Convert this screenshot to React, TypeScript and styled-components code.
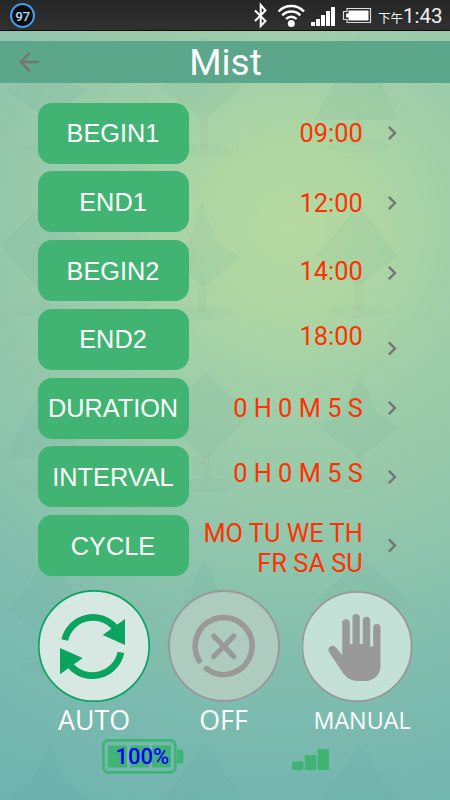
import React from "react";
import styled, { createGlobalStyle } from "styled-components";

const GlobalStyle = createGlobalStyle`
  html, body { margin: 0; padding: 0; }
  * { box-sizing: border-box; }
`;

const Screen = styled.div`
  position: relative;
  width: 450px;
  height: 800px;
  overflow: hidden;
  display: flex;
  flex-direction: column;
  font-family: Roboto, sans-serif;
  background: radial-gradient(
    circle at 291px 227px,
    #b6daa0 0px,
    #add6a3 90px,
    #a0cfa8 170px,
    #97c9aa 270px,
    #8dc4ac 350px,
    #80bdae 450px,
    #75b7af 560px,
    #6fb3af 640px
  );
`;

const Forest = styled.svg`
  position: absolute;
  inset: 0;
  width: 450px;
  height: 800px;
`;

const StatusBar = styled.header`
  position: relative;
  flex: none;
  height: 31px;
  display: flex;
  align-items: center;
  padding: 0 8px 1px 10px;
  background: linear-gradient(#262626, #303030 29px);
  border-bottom: 1px solid #1c0710;
  color: #fff;
`;

const StatusSpacer = styled.div`
  flex: 1;
`;

const ChargeBadge = styled.div`
  width: 25px;
  height: 25px;
  margin-top: 2px;
  border: 2.5px solid #3ba0f0;
  border-radius: 50%;
  background: #0a0a0c;
  color: #b4d4f4;
  display: flex;
  align-items: center;
  justify-content: center;
  font-size: 13.5px;
  font-weight: 500;
  letter-spacing: -0.3px;
`;

const StatusIcons = styled.svg`
  width: 120px;
  height: 30px;
  display: block;
`;

const Clock = styled.div`
  display: flex;
  align-items: baseline;
  width: 64px;
  margin: 4px 0 0 6px;
  font-size: 20.5px;
  line-height: 30px;
  color: #f2f2f2;
  white-space: nowrap;
`;

const Meridiem = styled.span`
  width: 25.5px;
  font-family: "Noto Sans CJK TC", sans-serif;
  font-size: 12.5px;
`;

const TitleBar = styled.div`
  position: relative;
  flex: none;
  height: 42px;
  margin-top: 10px;
  display: grid;
  grid-template-columns: 60px 1fr 60px;
  align-items: center;
  background: #5ca68c;
`;

const BackIcon = styled.svg`
  width: 30px;
  height: 30px;
  margin: -1px 0 0 14px;
  fill: #757575;
`;

const Title = styled.h1`
  margin: 0;
  padding: 1px 0 0 1px;
  text-align: center;
  font-size: 37px;
  line-height: 42px;
  font-weight: 400;
  color: #fff;
`;

const Settings = styled.main`
  position: relative;
  flex: none;
  margin-top: 19.5px;
  padding-left: 37.5px;
  display: flex;
  flex-direction: column;
  gap: 7.8px;
`;

const Row = styled.div`
  height: 61px;
  display: grid;
  grid-template-columns: 151px 174.3px 50px;
  align-items: center;
`;

const Label = styled.button`
  height: 61px;
  padding: 1px 0 0;
  border: none;
  border-radius: 14px;
  background: #41b474;
  color: #fff;
  font: 25.3px "Liberation Sans", Arial, sans-serif;
`;

const Value = styled.div<{ $dy: number }>`
  text-align: right;
  white-space: pre-line;
  font-size: 25.4px;
  line-height: 30px;
  color: #ff3300;
  transform: translateY(${(p) => p.$dy}px);
`;

const Chevron = styled.svg<{ $dy: number }>`
  width: 28px;
  height: 28px;
  margin-left: 15.5px;
  fill: #757575;
  transform: translateY(${(p) => p.$dy}px);
`;

const Modes = styled.section`
  position: relative;
  flex: none;
  margin-top: 14.2px;
  height: 145px;
  padding-left: 38px;
  display: grid;
  grid-template-columns: 130px 133.5px 112px;
`;

const Mode = styled.div`
  width: 112px;
  display: flex;
  flex-direction: column;
  align-items: center;
`;

const ModeIcon = styled.svg`
  width: 112px;
  height: 112px;
  flex: none;
`;

const ModeLabel = styled.span<{ $size: number; $shift: number }>`
  margin-left: ${(p) => p.$shift}px;
  font-family: "Open Sans", sans-serif;
  font-size: ${(p) => p.$size}px;
  line-height: 36px;
  color: #fff;
`;

const Footer = styled.footer`
  position: relative;
  flex: none;
  margin-top: 4px;
  padding: 0 121px 0 102px;
  display: flex;
  justify-content: space-between;
`;

const Battery = styled.div`
  position: relative;
  width: 82px;
  height: 35px;
`;

const BatteryShape = styled.svg`
  display: block;
  width: 82px;
  height: 35px;
`;

const BatteryText = styled.span`
  position: absolute;
  left: 13.5px;
  top: 3.5px;
  font-size: 22px;
  line-height: 28px;
  font-weight: 500;
  color: #0000ff;
`;

const SignalBars = styled.svg`
  width: 37px;
  height: 35px;
`;

const rows = [
  { label: "BEGIN1", value: "09:00", dy: 0, arrow: 0 },
  { label: "END1", value: "12:00", dy: 1, arrow: 1 },
  { label: "BEGIN2", value: "14:00", dy: 0, arrow: 2 },
  { label: "END2", value: "18:00", dy: -3.5, arrow: 9.5 },
  { label: "DURATION", value: "0 H 0 M 5 S", dy: 0.2, arrow: 0 },
  { label: "INTERVAL", value: "0 H 0 M 5 S", dy: -4, arrow: 0 },
  { label: "CYCLE", value: "MO TU WE TH\nFR SA SU", dy: 1.5, arrow: -0.5 },
];

const trees = [
  { x: 49, d: "M49 35 60 78 88 90 45 118 5 90 38 78Z", ground: 150 },
  { x: 204, d: "M198 42Q204 30 210 42L242 88 204 120 160 88Z", ground: 150 },
  { x: 359, d: "M359 35 398 120H314Z", ground: 146 },
  { x: 45, d: "M45 202 88 245 45 298 1 245Z", ground: 310 },
  { x: 202, d: "M202 203 218 245 242 257 204 287 166 257 188 245Z", ground: 313 },
  { x: 359, d: "M359 205 398 256 359 286 316 256Z", ground: 312 },
  { x: 49, d: "M49 372 85 458H5Z", ground: 485 },
  { x: 206, d: "M206 372 251 415 206 459 161 415Z", ground: 485 },
  { x: 360, d: "M360 372 377 413 400 427 360 457 318 427 343 413Z", ground: 483 },
  { x: 49, d: "M49 560 90 610 49 640 6 610Z", ground: 668 },
  { x: 204, d: "M204 558 243 645H164Z", ground: 668 },
  { x: 361, d: "M361 557 408 600 361 645 316 600Z", ground: 668 },
  { x: 49, d: "M49 743 66 783 90 800H8L32 783Z", ground: 850 },
  { x: 204, d: "M204 743 244 800H164Z", ground: 850 },
  { x: 359, d: "M359 743 396 800H322Z", ground: 850 },
];

export default function App() {
  return (
    <>
      <GlobalStyle />
      <Screen>
        <Forest viewBox="0 0 450 800">
          {trees.map((t, i) => (
            <g key={i} fill="#4a9a90">
              <ellipse cx={t.x} cy={t.ground} rx="30" ry="7" opacity="0.035" />
              <rect x={t.x - 4} y={t.ground - 32} width="8" height="32" fill="#b09a86" opacity="0.07" />
              <path d={t.d} opacity="0.065" />
            </g>
          ))}
        </Forest>

        <StatusBar>
          <ChargeBadge>97</ChargeBadge>
          <StatusSpacer />
          <StatusIcons viewBox="252 0 120 30">
            <path d="M255 10.500 265.500 21l-4.800 5V5l4.800 5.500L255 21" fill="none" stroke="#fff" strokeWidth="2" />
            <g fill="none" stroke="#fff" strokeWidth="2.400">
              <path d="M278.500 11.500a17.500 17.500 0 0 1 25.500 0" />
              <path d="M282.300 15.300a12.500 12.500 0 0 1 18 0" />
              <path d="M286 19a7.500 7.500 0 0 1 10.600 0" />
            </g>
            <circle cx="291.300" cy="23.600" r="3.500" fill="#fff" />
            <g fill="#fff">
              <rect x="311" y="22" width="4" height="4" />
              <rect x="316" y="19" width="4" height="7" />
              <rect x="321" y="15" width="4" height="11" />
              <rect x="326" y="11" width="4" height="15" />
              <rect x="331" y="7" width="4" height="19" />
            </g>
            <path d="M347 8.500h23.500v14H347v-3h-3.500v-8h3.500z" fill="none" stroke="#ddd" strokeWidth="1.200" />
            <path d="M348.500 10.500h20v10h-20v-3H346v-4h2.500z" fill="#fff" />
          </StatusIcons>
          <Clock>
            <Meridiem>下午</Meridiem>1:43
          </Clock>
        </StatusBar>

        <TitleBar>
          <BackIcon viewBox="0 0 24 24">
            <path d="M20 11H7.830l5.590-5.590L12 4l-8 8 8 8 1.410-1.410L7.830 13H20z" />
          </BackIcon>
          <Title>Mist</Title>
        </TitleBar>

        <Settings>
          {rows.map((r) => (
            <Row key={r.label}>
              <Label>{r.label}</Label>
              <Value $dy={r.dy}>{r.value}</Value>
              <Chevron $dy={r.arrow} viewBox="0 0 24 24">
                <path d="M10 6 8.590 7.410 13.170 12l-4.580 4.590L10 18l6-6z" />
              </Chevron>
            </Row>
          ))}
        </Settings>

        <Modes>
          <Mode>
            <ModeIcon viewBox="0 0 112 112">
              <circle cx="56" cy="56" r="55.200" fill="#d7e7e2" stroke="#0aa45e" strokeWidth="1.700" />
              <g fill="none" stroke="#0aa45e" strokeWidth="6.800">
                <path d="M26.700 50A29 29 0 0 1 77 37.500" />
                <path d="M82.900 62.400A29 29 0 0 1 32 75" />
              </g>
              <path d="M87 29V55L64.700 45ZM22 58 44.700 68 22 84.300Z" fill="#0aa45e" />
            </ModeIcon>
            <ModeLabel $size={26.800} $shift={0}>AUTO</ModeLabel>
          </Mode>
          <Mode>
            <ModeIcon viewBox="0 0 112 112">
              <circle cx="56" cy="56" r="55" fill="#adcbbf" stroke="#999" strokeWidth="1.900" />
              <g fill="none" stroke="#999" strokeLinecap="round">
                <path d="M31.200 70.700A28.500 28.500 0 1 1 38.500 78.800" strokeWidth="5.600" />
                <path d="M45.700 46 65.900 66.600M65.900 46 45.700 66.600" strokeWidth="5.200" />
              </g>
            </ModeIcon>
            <ModeLabel $size={26.800} $shift={-1}>OFF</ModeLabel>
          </Mode>
          <Mode>
            <ModeIcon viewBox="0 0 112 112">
              <circle cx="55" cy="56.500" r="54.600" fill="#c3e1d6" stroke="#999" strokeWidth="1.900" />
              <path
                fill="#999"
                d="M40.200 65V33.100a3.800 3.800 0 0 1 7.600 0V54h2.700V27.700a3.650 3.650 0 0 1 7.300 0V54h3V30.400a3.700 3.700 0 0 1 7.400 0V56.500h3V37.700a3.650 3.650 0 0 1 7.300 0V76C78.500 84.500 72 91 63.500 91H57C50 91 45 88.500 41 83L27.300 62.500C24 57.500 30.500 53.500 34 57.500Z"
              />
            </ModeIcon>
            <ModeLabel $size={23.300} $shift={9}>MANUAL</ModeLabel>
          </Mode>
        </Modes>

        <Footer>
          <Battery>
            <BatteryShape viewBox="0 0 82 35">
              <rect x="1.300" y="1.300" width="72" height="32" rx="5" fill="none" stroke="#40b474" strokeWidth="2.700" />
              <path d="M75 10.500h3.500q3 0 3 3v8q0 3-3 3H75z" fill="#40b474" />
              <path d="M6 6.500h19v22H6zM28 6.500h19v22H28zM50 6.500h19v22H50z" fill="#40b474" />
            </BatteryShape>
            <BatteryText>100%</BatteryText>
          </Battery>
          <SignalBars viewBox="0 0 37 35" fill="#40b474">
            <rect x="0" y="22.500" width="11.500" height="8.500" rx="1" />
            <rect x="12.800" y="16" width="11.500" height="15" rx="1" />
            <rect x="25.600" y="10" width="11.400" height="21" rx="1" />
          </SignalBars>
        </Footer>
      </Screen>
    </>
  );
}
